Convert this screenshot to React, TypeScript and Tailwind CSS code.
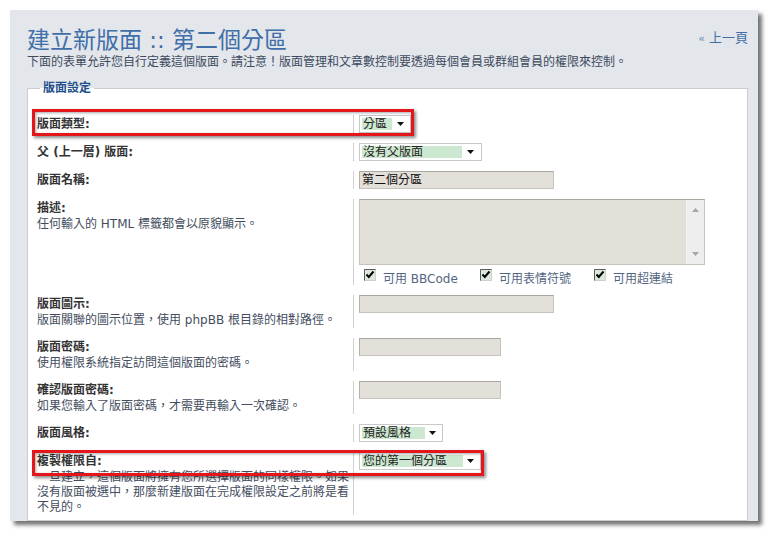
import React from 'react';

const font = "font-['DejaVu_Sans','Noto_Sans_CJK_TC',sans-serif]";

// 下拉選單：綠色反白的已選項 + 右側小箭頭
const Select = ({ value, box, fill }: { value: string; box: string; fill: string }) => (
  <div className={`flex h-[18px] border border-[#c9c9c9] bg-white p-[2px] ${box}`}>
    <span className={`h-[12px] bg-[#cde8d0] pl-[1px] text-[12px] leading-[12px] text-[#222] ${fill}`}>{value}</span>
    <span className="flex flex-1 items-center justify-center">
      <svg width="7" height="4" viewBox="0 0 7 4">
        <path d="M0 0h7L3.5 4z" fill="#111" />
      </svg>
    </span>
  </div>
);

const TextInput = ({ value = '', box }: { value?: string; box: string }) => (
  <div
    className={`h-[18px] border border-[#c6c2bc] border-t-[#aaa6a0] border-l-[#b4b0aa] bg-[#e3dfd9] pl-[2px] text-[12px] leading-[16px] text-[#111] ${box}`}
  >
    {value}
  </div>
);

const Check = ({ label, box }: { label: string; box: string }) => (
  <div className={`flex items-start gap-[7px] ${box}`}>
    <svg width="12" height="12" viewBox="0 0 12 12" className="mt-[4px] shrink-0">
      <rect x="0" y="0" width="12" height="12" fill="#dde8dc" />
      <path d="M0.5 12V0.5H12" stroke="#5a5a5a" fill="none" />
      <path d="M11.5 0.5V11.5H0.5" stroke="#c8d2c8" fill="none" />
      <path d="M2.5 5.5l2.3 2.5 4.7-5.5" stroke="#000" strokeWidth="2" fill="none" />
    </svg>
    <span className="mt-[7px] text-[12px] leading-[14px] text-[#536482]">{label}</span>
  </div>
);

const Row = ({
  label,
  explain,
  children,
  mark,
}: {
  label: string;
  explain?: React.ReactNode;
  children: React.ReactNode;
  mark?: string;
}) => (
  <div className="relative flex py-[5px]">
    <div className="w-[316px] shrink-0">
      <div className="text-[12px] leading-[18px] font-bold text-[#333]">{label}</div>
      {explain && <div className="text-[12px] leading-[15px] text-[#434d5e]">{explain}</div>}
    </div>
    <div className="flex-1 border-l border-[#d0d0d0] pl-[5px]">{children}</div>
    {mark && <div className={mark} />}
  </div>
);

export default function App() {
  return (
    <div className={`h-[533px] w-[770px] overflow-hidden bg-white pt-[10px] pl-[10px] ${font}`}>
      <div className="h-[511px] w-[748px] overflow-hidden bg-[#e3e6ea] pt-[16px] pr-[10px] pl-[17px] shadow-[4px_4px_4px_rgba(0,0,0,0.55)]">
        {/* 標題列 */}
        <div className="flex items-start justify-between">
          <h1 className="text-[23px] leading-[28px] font-normal text-[#3f6ea8]">建立新版面 :: 第二個分區</h1>
          <a className="mt-[3px] text-[13px] leading-[18px] text-[#3f6ea8]">
            <span className="text-[11px] text-[#6b89b0]">«</span> 上一頁
          </a>
        </div>
        <p className="text-[12px] leading-[16px] text-[#3d4b5f]">
          下面的表單允許您自行定義這個版面。請注意！版面管理和文章數控制要透過每個會員或群組會員的權限來控制。
        </p>

        <fieldset className="mt-[9px] border border-[#cccccc] bg-white px-[9px] pt-[13px]">
          <legend className="ml-[3px] px-[3px] text-[12px] leading-[18px] font-bold text-[#1f4f8a]">版面設定</legend>

          <Row
            label="版面類型:"
            mark="pointer-events-none absolute top-[-1px] left-[-5px] h-[27px] w-[382px] border-[3px] border-[#e3161b] shadow-[2px_2px_3px_rgba(0,0,0,0.45),inset_1px_1px_3px_rgba(0,0,0,0.35)]"
          >
            <Select value="分區" box="w-[52px]" fill="w-[30px]" />
          </Row>

          <Row label="父 (上一層) 版面:">
            <Select value="沒有父版面" box="w-[123px]" fill="w-[100px]" />
          </Row>

          <Row label="版面名稱:">
            <TextInput value="第二個分區" box="w-[195px]" />
          </Row>

          <Row label="描述:" explain="任何輸入的 HTML 標籤都會以原貌顯示。">
            <div className="flex h-[66px] w-[346px] border border-[#c6c2bc] border-t-[#aaa6a0] bg-[#e3dfd9]">
              <div className="flex-1" />
              <div className="flex w-[18px] flex-col items-center justify-between border-l border-[#f4f4f4] bg-[#eeeeee] py-[8px]">
                <svg width="7" height="4" viewBox="0 0 7 4">
                  <path d="M0 4h7L3.5 0z" fill="#a5a5a5" />
                </svg>
                <svg width="7" height="4" viewBox="0 0 7 4">
                  <path d="M0 0h7L3.5 4z" fill="#a5a5a5" />
                </svg>
              </div>
            </div>
            <div className="ml-[5px] flex h-[20px]">
              <Check label="可用 BBCode" box="w-[116px]" />
              <Check label="可用表情符號" box="w-[114px]" />
              <Check label="可用超連結" box="w-[100px]" />
            </div>
          </Row>

          <Row label="版面圖示:" explain="版面關聯的圖示位置，使用 phpBB 根目錄的相對路徑。">
            <TextInput box="w-[195px]" />
          </Row>

          <Row label="版面密碼:" explain="使用權限系統指定訪問這個版面的密碼。">
            <TextInput box="w-[142px]" />
          </Row>

          <Row label="確認版面密碼:" explain="如果您輸入了版面密碼，才需要再輸入一次確認。">
            <TextInput box="w-[142px]" />
          </Row>

          <Row label="版面風格:">
            <Select value="預設風格" box="w-[84px]" fill="w-[63px]" />
          </Row>

          <Row
            label="複製權限自:"
            explain="一旦建立，這個版面將擁有您所選擇版面的同樣權限。如果沒有版面被選中，那麼新建版面在完成權限設定之前將是看不見的。"
            mark="pointer-events-none absolute top-[3px] left-[-5px] h-[26px] w-[452px] border-[3px] border-[#e3161b] shadow-[2px_2px_3px_rgba(0,0,0,0.45),inset_1px_1px_3px_rgba(0,0,0,0.35)]"
          >
            <Select value="您的第一個分區" box="w-[122px]" fill="w-[101px]" />
          </Row>
        </fieldset>
      </div>
    </div>
  );
}
